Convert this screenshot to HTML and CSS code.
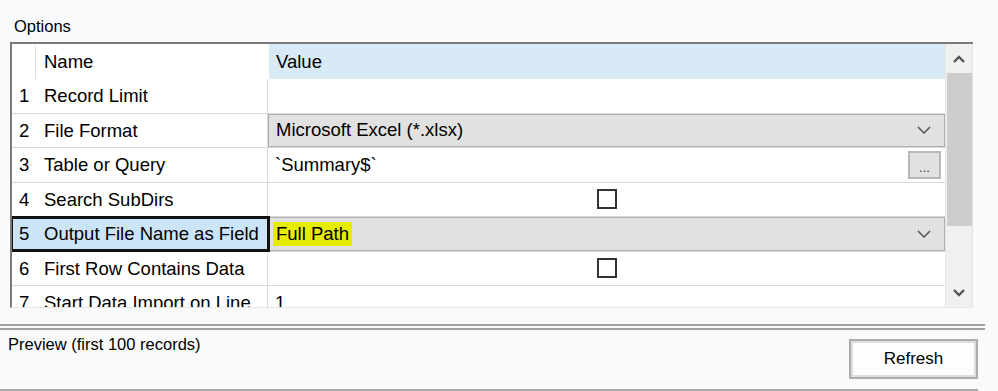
FILE: index.html
```html
<!DOCTYPE html>
<html lang="en">
<head>
    <meta charset="UTF-8">
    <title>Input Data - Options</title>
    <link rel="stylesheet" href="styles.css">
</head>
<body>
<div class="options">
    <div class="caption">Options</div>
    <div class="grid">
        <div class="grid-body">
            <div class="row header">
                <div class="idx"></div>
                <div class="name">Name</div>
                <div class="value">Value</div>
            </div>
            <div class="row">
                <div class="idx">1</div>
                <div class="name">Record Limit</div>
                <div class="value"></div>
            </div>
            <div class="row">
                <div class="idx">2</div>
                <div class="name">File Format</div>
                <div class="value combo">
                    <span>Microsoft Excel (*.xlsx)</span>
                    <svg class="chevron" width="14" height="8" viewBox="0 0 14 8"><path d="M1 1 L7 7 L13 1" fill="none" stroke="#555" stroke-width="1.5"/></svg>
                </div>
            </div>
            <div class="row">
                <div class="idx">3</div>
                <div class="name">Table or Query</div>
                <div class="value text">
                    <span>`Summary$`</span>
                    <div class="browse">...</div>
                </div>
            </div>
            <div class="row">
                <div class="idx">4</div>
                <div class="name">Search SubDirs</div>
                <div class="value check"><span class="checkbox"></span></div>
            </div>
            <div class="row selected">
                <div class="idx">5</div>
                <div class="name">Output File Name as Field</div>
                <div class="value combo">
                    <span class="highlight">Full Path</span>
                    <svg class="chevron" width="14" height="8" viewBox="0 0 14 8"><path d="M1 1 L7 7 L13 1" fill="none" stroke="#555" stroke-width="1.5"/></svg>
                </div>
            </div>
            <div class="row">
                <div class="idx">6</div>
                <div class="name">First Row Contains Data</div>
                <div class="value check"><span class="checkbox"></span></div>
            </div>
            <div class="row">
                <div class="idx">7</div>
                <div class="name">Start Data Import on Line</div>
                <div class="value text"><span>1</span></div>
            </div>
        </div>
        <div class="vscroll">
            <svg class="arrow" width="12" height="8" viewBox="0 0 12 8"><path d="M1 7 L6 2 L11 7" fill="none" stroke="#555" stroke-width="2.4"/></svg>
            <div class="thumb"></div>
            <div class="track"></div>
            <svg class="arrow" width="12" height="8" viewBox="0 0 12 8"><path d="M1 1 L6 6 L11 1" fill="none" stroke="#555" stroke-width="2.4"/></svg>
        </div>
    </div>
</div>

<div class="splitter"></div>

<div class="preview">
    <div class="preview-title">Preview (first 100 records)</div>
    <button class="refresh">Refresh</button>
</div>
<div class="preview-end"></div>
</body>
</html>
```

FILE: styles.css
```css
html, body {
    margin: 0;
    padding: 0;
    background-color: #f9fafc;
    font-family: "Liberation Sans", Arial, sans-serif;
    font-size: 18.5px;
    color: #000;
    overflow: hidden;
}

.options {
    padding: 13px 25px 0 10px;
}

.caption {
    font-size: 16.5px;
    padding-left: 4px;
    height: 29px;
    line-height: 26px;
}

.grid {
    display: flex;
    height: 263px;
    border-top: 2px solid #7a7a7a;
    border-left: 2px solid #7a7a7a;
    border-bottom: 1px solid #e6e6e6;
    background-color: #fff;
    overflow: hidden;
}

.grid-body {
    flex: 1;
    display: flex;
    flex-direction: column;
}

.row {
    display: flex;
    height: 33.5px;
    flex-shrink: 0;
    border-bottom: 1px solid #dadada;
    box-sizing: content-box;
}

.row .idx {
    width: 24px;
    padding-left: 7px;
    box-sizing: border-box;
    line-height: 33.5px;
}

.row .name {
    width: 232px;
    padding-left: 8px;
    box-sizing: border-box;
    line-height: 33.5px;
    border-right: 1px solid #dadada;
    white-space: nowrap;
    overflow: hidden;
}

.row .value {
    flex: 1;
    display: flex;
    align-items: center;
    padding: 0 7px;
    position: relative;
}

.header {
    height: 35px;
    border-bottom: none;
}

.header .idx {
    border-right: 1px solid #e0e0e0;
    margin: 1px 0 0;
}

.header .name {
    line-height: 35px;
    border-right: none;
    padding-left: 8px;
    width: 233px;
}

.header .value {
    background-color: #d9eaf7;
}

.combo {
    background-color: #e1e1e1;
    border: 1px solid #adadad;
    justify-content: space-between;
}

.combo .chevron {
    margin-right: 6px;
}

.highlight {
    background-color: #e6ec00;
    padding: 1px 3px;
    margin-left: -3px;
}

.text .browse {
    position: absolute;
    right: 4px;
    top: 3px;
    width: 33px;
    height: 28px;
    box-sizing: border-box;
    border: 2px solid #b8b8b8;
    background-color: #e1e1e1;
    font-size: 13px;
    text-align: center;
    line-height: 30px;
    color: #333;
}

.check {
    justify-content: center;
}

.checkbox {
    width: 20px;
    height: 20px;
    box-sizing: border-box;
    border: 2px solid #333;
    background-color: #fff;
}

.selected {
    position: relative;
}

.selected .idx,
.selected .name {
    background-color: #cce4f7;
}

.selected::before {
    content: "";
    position: absolute;
    z-index: 2;
    left: -2px;
    top: -1px;
    width: 254px;
    height: 30px;
    border: 3px solid #111;
    pointer-events: none;
}

.vscroll {
    width: 26px;
    display: flex;
    flex-direction: column;
    align-items: center;
    background-color: #f0f0f0;
    border-left: 1px solid #e6e6e6;
    border-right: 1px solid #e3e3e3;
}

.vscroll .arrow {
    margin: 11px 0 10px;
    flex-shrink: 0;
}

.vscroll .thumb {
    width: 25px;
    height: 153px;
    background-color: #cdcdcd;
    flex-shrink: 0;
}

.vscroll .track {
    flex: 1;
}

.splitter {
    margin-top: 16px;
    width: 985px;
    height: 2px;
    border-top: 2px solid #a0a0a0;
    border-bottom: 2px solid #a0a0a0;
}

.preview {
    display: flex;
    justify-content: space-between;
    align-items: flex-start;
    padding: 3px 20px 0 8px;
    height: 56px;
}

.preview-title {
    font-size: 16.5px;
    line-height: 22px;
}

.refresh {
    margin-top: 6px;
    width: 129px;
    height: 40px;
    font-family: "Liberation Sans", Arial, sans-serif;
    font-size: 17px;
    background-color: #fdfdfd;
    border: 2px solid #acacac;
    box-shadow: inset 0 0 0 2px #dedede;
    color: #000;
}

.preview-end {
    width: 978px;
    height: 0;
    border-top: 2px solid #a8a8a8;
}
```
